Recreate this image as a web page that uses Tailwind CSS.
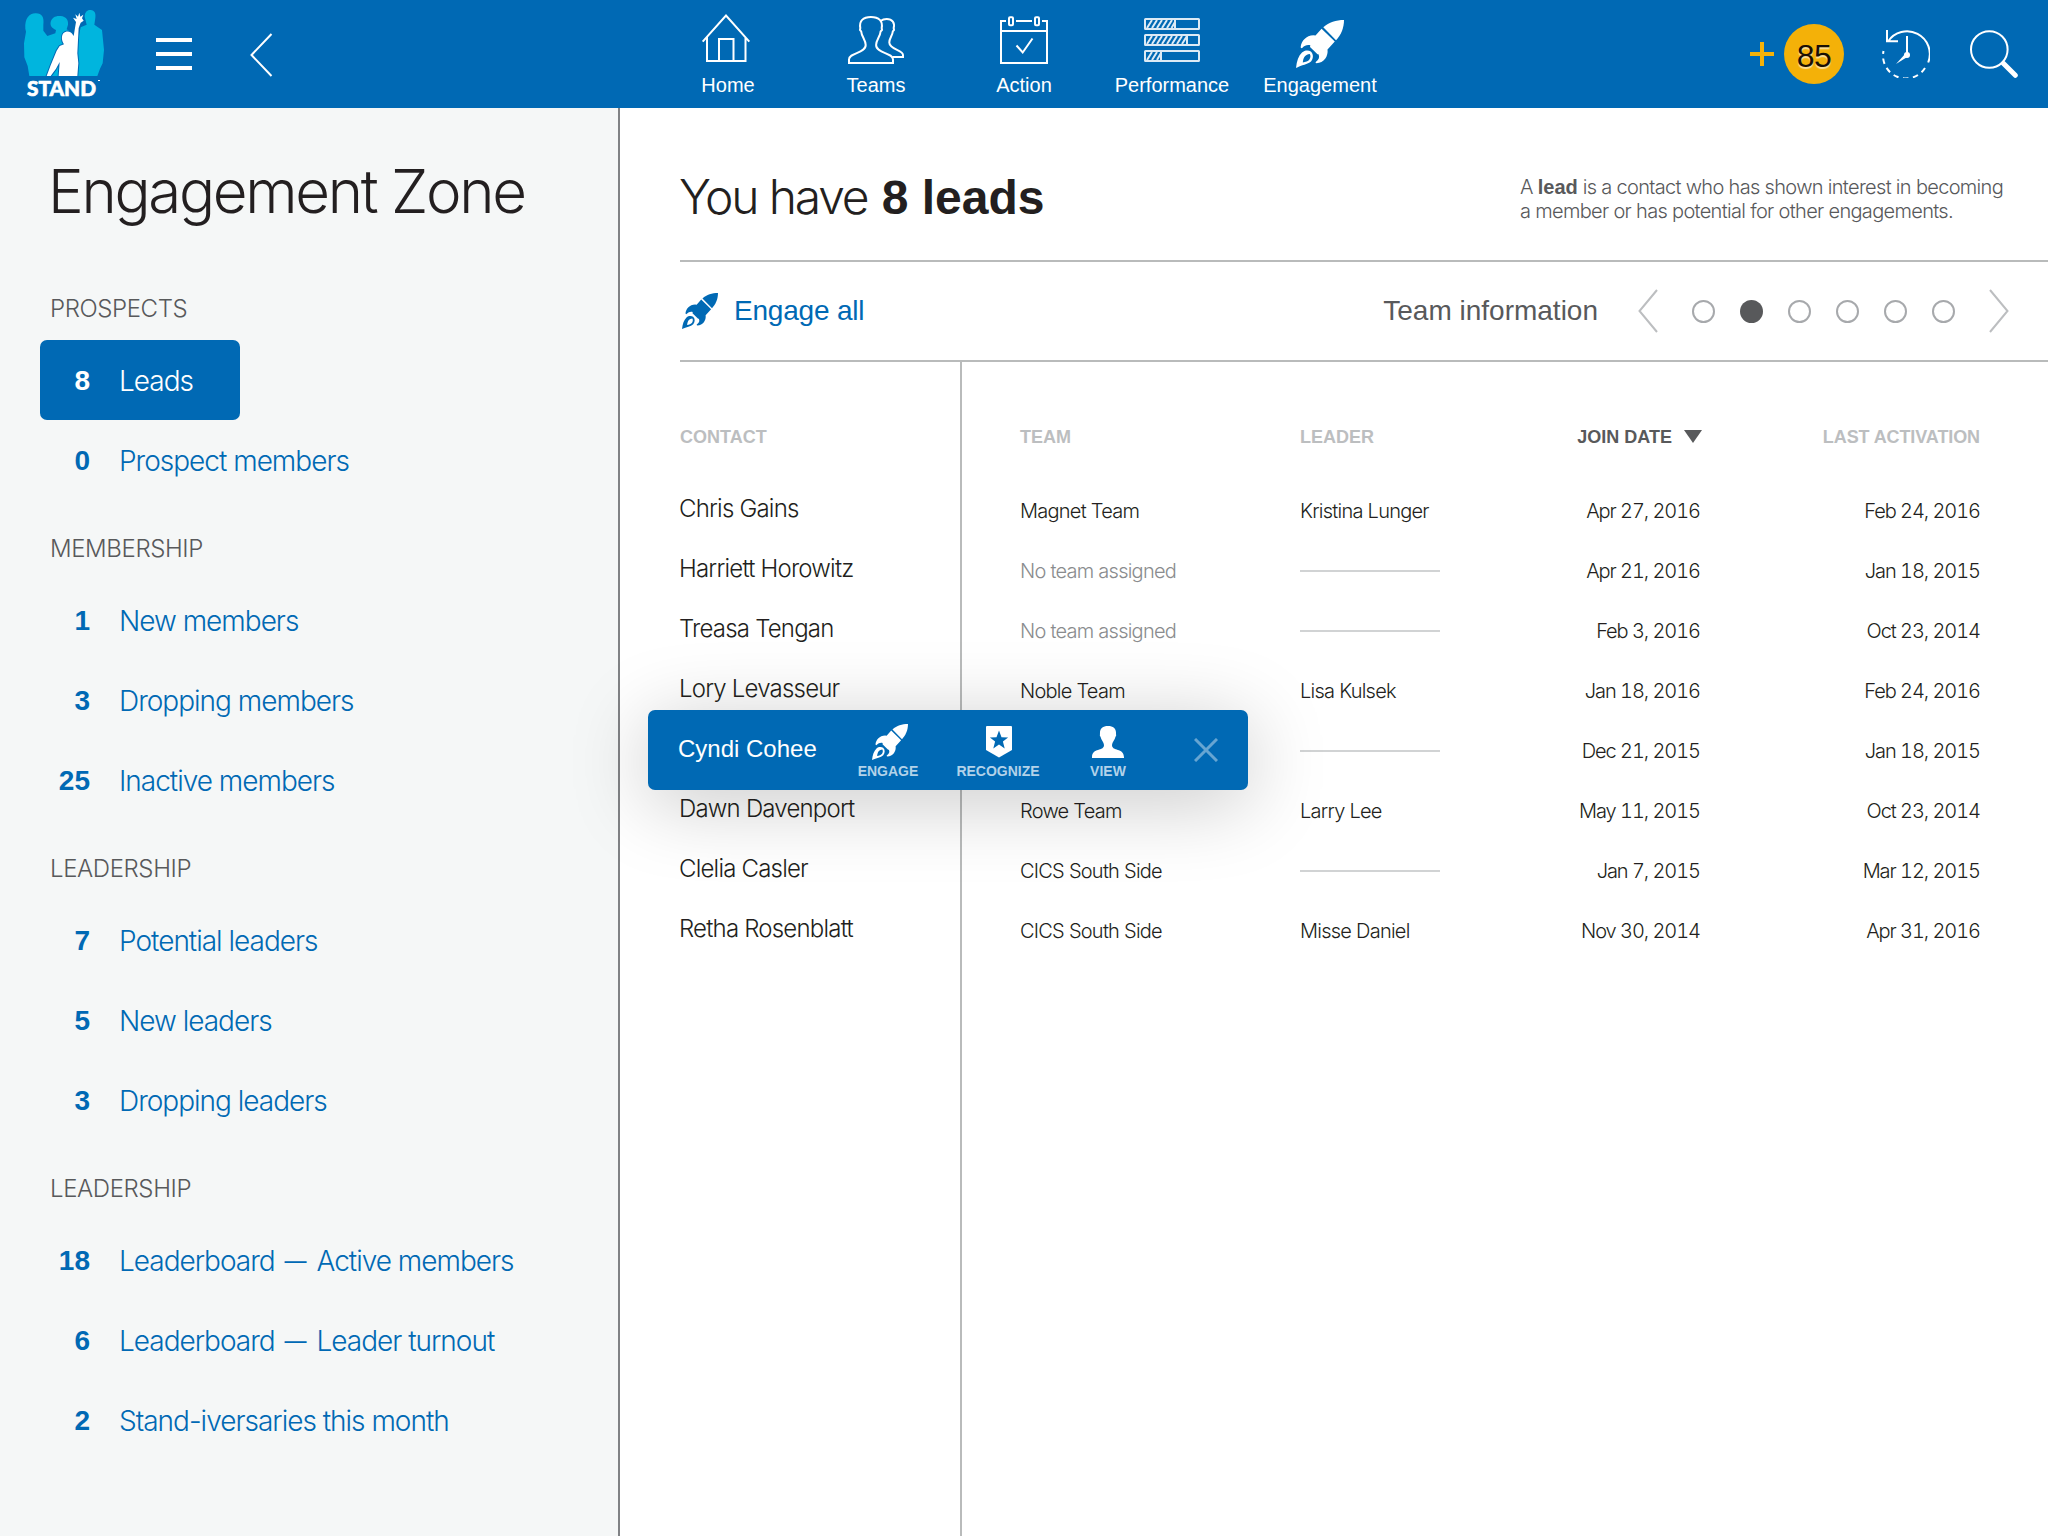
<!DOCTYPE html>
<html lang="en">
<head>
<meta charset="utf-8">
<title>Engagement Zone</title>
<script src="https://cdn.jsdelivr.net/npm/@tailwindcss/browser@4"></script>
</head>
<body class="h-[1536px] w-[2048px] overflow-hidden bg-white font-['Liberation_Sans',Arial,sans-serif] text-[#231f20]">

<svg class="hidden">
  <symbol id="rocket" viewBox="0 0 48 48">
    <path fill="currentColor" d="M27.3 7.3C33 2 40 0 48 0c0 8-3 15-8 20.200z"/>
    <path fill="currentColor" d="M25.600 8.700 38.800 21.600 31.500 29.500C32.500 36 28 43 20.500 43.200 19.600 43.200 19.300 42.300 20 41.800 23 39.500 23.800 37 22.500 34.300L21.500 34.300 14 27 14.300 25.300C11.500 24.300 8.500 25.500 6.500 27.700 5.600 28.600 4.500 28.200 4.700 26.800 5.500 21 10 15.500 17.500 15.300L19.500 15.500z"/>
    <path fill="currentColor" fill-rule="evenodd" d="M0 48C.8 41 2.500 36 6 32.600 8.500 30.200 12.500 30 14.800 31.600 17.600 34 17.600 38.500 15 41.500 11.600 44.600 6 44.800 0 48zM6.800 42.500C9.500 42.300 12.200 41.300 13.400 39.600 14.700 37.600 14.700 35.400 13.800 34 11.500 34.200 9.300 35.400 8.200 37.300 7.300 39 7 40.800 6.800 42.500z"/>
  </symbol>
</svg>

<header class="flex h-[108px] items-start bg-[#0069b4] text-white">
  <div class="flex w-[654px] shrink-0">
    <svg class="mt-2 ml-[22px] h-[90px] w-[84px] overflow-visible" viewBox="66 24 252 270">
      <path fill="#00b5de" d="M88 228 83 198 73 172 72 130 78 95 76 86C74 55 88 39 108 40 126 40 133 52 130 75L130 92 142 108 166 100 168 90C154 84 150 76 152 66 155 52 168 46 182 48 198 50 206 60 204 74L200 88 236 110 242 82 260 74 254 50C254 36 262 29 272 30 284 31 288 40 286 54L283 74 306 90 309 120 312 150 308 190 300 206 292 228z"/>
      <path fill="#fff" stroke="#0069b4" stroke-width="6" paint-order="stroke" d="M140 228 152 196 170 152 179 138 192 133C184 122 184 108 190 100 198 92 212 93 217 102L221 108 226 78 228 66 219 53 230 57 226 43 234 50 238 38 241 50 250 44 246 55 251 62 242 68 236 84 234 120 232 160 235 190 232 228H176L179 186 168 206 158 220 152 228z"/>
      <text x="81" y="287" textLength="207" lengthAdjust="spacingAndGlyphs" class="fill-white stroke-white stroke-2 font-['Lato'] text-[65px] font-black">STAND</text>
      <path fill="#fff" d="M294 240h6v3h-6z"/>
    </svg>
    <svg class="mt-[38px] ml-[50px] h-8 w-9" viewBox="0 0 36 32" fill="#fff"><path d="M0 0h36v4H0zM0 14h36v4H0zM0 28h36v4H0z"/></svg>
    <svg class="mt-[33px] ml-[58px] h-11 w-6" viewBox="0 0 24 44" fill="none" stroke="#fff" stroke-width="2"><path d="M21.500 1 1.500 22 21.500 43"/></svg>
  </div>
  <nav class="flex shrink-0 pt-3.5 text-xl/6">
    <a class="flex w-[148px] flex-col items-center"><svg class="h-14 w-[60px]" viewBox="0 0 60 56" fill="none" stroke="#fff" stroke-width="2"><path d="M4.700 27.700 28 1.500l23.300 26.200M9 23v24h38.500V23M21 47V25h14.500v22"/></svg><span class="mt-[3px]">Home</span></a>
    <a class="flex w-[148px] flex-col items-center"><svg class="h-14 w-[60px]" viewBox="-2 -2 60 56" fill="none" stroke="#fff" stroke-width="2"><path d="M1 47V43.500C1 36.500 17.700 37.500 17.700 29 17.700 24 13.500 20.500 13.200 15.500L12 14 12.300 12C11 5 15 1 22.900 1 31 1 35 5 33.700 12L34 14 32.600 15.500C32.300 20.500 28.100 24 28.100 29 28.100 37.500 45 36.500 45 43.500V47z"/><path d="M32.500 5C34.500 3.500 36.500 3 38.700 3 44.500 3 47 7 45.700 12L46 14 44.800 15.500C44.500 19.500 41.300 22 41.300 26.500 41.300 33.500 55 34 55 39V41H44.500"/></svg><span class="mt-[3px]">Teams</span></a>
    <a class="flex w-[148px] flex-col items-center"><svg class="h-14 w-[60px]" viewBox="0 0 60 56" fill="none" stroke="#fff" stroke-width="2"><path d="M12 7H7v42h46V7h-5M22 7h16M7 17h46"/><rect x="15" y="3.200" width="4" height="8" rx="1"/><rect x="41" y="3.200" width="4" height="8" rx="1"/><path d="M22.500 31.500 28.700 38.500 38.500 24.500"/></svg><span class="mt-[3px]">Action</span></a>
    <a class="flex w-[148px] flex-col items-center"><svg class="h-14 w-[60px]" viewBox="0 0 60 56" fill="none" stroke="#dceaf5" stroke-width="2"><rect x="3" y="5" width="54" height="10" rx=".5"/><rect x="3" y="21" width="54" height="10" rx=".5"/><rect x="3" y="37" width="54" height="10" rx=".5"/><path d="M33 5v10M45 21v10M19 37v10"/><path d="M5 14 10 6M10 14l5-8M15 14l5-8M20 14l5-8M25 14l5-8M29.500 14 33 8M5 30l5-8M10 30l5-8M15 30l5-8M20 30l5-8M25 30l5-8M30 30l5-8M35 30l5-8M40 30l5-8M5 46l5-8M10 46l5-8M15 46l4-7"/></svg><span class="mt-[3px]">Performance</span></a>
    <a class="flex w-[148px] flex-col items-center"><svg class="mt-1.5 mb-0.5 h-12 w-12"><use href="#rocket"/></svg><span class="mt-[3px]">Engagement</span></a>
  </nav>
  <div class="flex grow items-start">
    <svg class="mt-[42px] ml-[356px] size-6" viewBox="0 0 24 24" fill="#f5b209"><path d="M10 0h4v10h10v4H14v10h-4V14H0v-4h10z"/></svg>
    <div class="mt-6 ml-2.5 flex size-[60px] items-center justify-center rounded-full bg-[#f4b108] pt-[3px] text-[32px] tracking-[-0.5px] text-[#1a0f05] [text-shadow:0_2px_1px_rgba(255,255,255,0.6)]">85</div>
    <svg class="mt-[30px] ml-[38px] size-12" viewBox="0 0 48 48" fill="none" stroke="#fff" stroke-width="2"><path d="M6 11.500A22.800 22.800 0 0 1 46.200 32.500M5 0v11.200h11"/><path stroke-dasharray="5.500 4.500" d="M43 38A22.800 22.800 0 0 1 1.500 21"/><path d="M25 6v18"/><circle cx="25" cy="25" r="3" fill="#fff" stroke="none"/><path fill="#fff" stroke="none" d="M14 34 24 23l2 3.500z"/></svg>
    <svg class="mt-[30px] ml-10 size-12" viewBox="0 0 48 48" fill="none" stroke="#fff"><circle cx="19.300" cy="19.500" r="18.300" stroke-width="2"/><path stroke-width="5" stroke-linecap="round" d="M33.500 33.500 45.300 45.300"/></svg>
  </div>
</header>

<div class="flex h-[1428px]">
  <aside class="w-[620px] shrink-0 border-r-2 border-[#808285] bg-[#f5f7f7] font-['Inter',sans-serif] font-light">
    <h1 class="h-[152px] pt-[53px] pl-[48px] text-[60px]/[60px] tracking-[-2.3px]">Engagement Zone</h1>
    <div id="menu"></div>
  </aside>

  <main class="relative w-[1428px] shrink-0 pl-[60px]">
    <div class="flex h-[154px] justify-between border-b-2 border-[#b9bbbb]">
      <h2 class="pt-[65px] text-[48px]/[48px] whitespace-nowrap"><span class="-ml-px font-['Inter',sans-serif] font-light tracking-[-2.2px]">You have</span> <b class="ml-px font-bold">8 leads</b></h2>
      <p class="mr-7 w-[500px] pt-[67px] font-['Inter',sans-serif] text-xl/6 font-light tracking-[-0.68px] whitespace-nowrap text-[#58595b]">A <b class="font-['Liberation_Sans'] font-bold tracking-normal">lead</b> is a contact who has shown interest in becoming<br>a member or has potential for other engagements.</p>
    </div>
    <div class="flex h-[100px] items-center border-b-2 border-[#b9bbbb] text-[28px]/8">
      <a class="flex items-center text-[#0069b4]"><svg class="ml-0.5 size-9"><use href="#rocket"/></svg><span class="ml-4 tracking-[-0.2px]">Engage all</span></a>
      <div class="mr-[39px] ml-auto flex items-center text-[#58595b]">
        <span>Team information</span>
        <svg class="ml-10 h-11 w-5" viewBox="0 0 20 44" fill="none" stroke="#bcbec0" stroke-width="2"><path d="M19 1 1.500 22 19 43"/></svg>
        <div class="mx-[34px] flex gap-[25px] pt-px">
          <i class="size-[23px] rounded-full border-2 border-[#a7a9ac]"></i>
          <i class="size-[23px] rounded-full bg-[#58595b]"></i>
          <i class="size-[23px] rounded-full border-2 border-[#a7a9ac]"></i>
          <i class="size-[23px] rounded-full border-2 border-[#a7a9ac]"></i>
          <i class="size-[23px] rounded-full border-2 border-[#a7a9ac]"></i>
          <i class="size-[23px] rounded-full border-2 border-[#a7a9ac]"></i>
        </div>
        <svg class="h-11 w-5" viewBox="0 0 20 44" fill="none" stroke="#bcbec0" stroke-width="2"><path d="M1 1 18.500 22 1 43"/></svg>
      </div>
    </div>
    <div class="flex h-[1174px]">
      <div class="w-[282px] shrink-0 border-r-2 border-[#b9bbbb] pt-[62px]">
        <div class="h-[57px] text-lg/[26px] font-bold text-[#bcbec0]">CONTACT</div>
        <div id="contacts" class="-ml-px font-['Inter',sans-serif] text-2xl font-light tracking-[-0.8px]"></div>
      </div>
      <div class="pt-[62px] pl-[58px]">
        <div class="grid h-[57px] grid-cols-[280px_200px_200px_280px] text-lg/[26px] font-bold text-[#bcbec0]">
          <span>TEAM</span><span>LEADER</span>
          <span class="flex justify-end text-[#58595b]">JOIN DATE<svg class="mt-[6px] -mr-0.5 ml-3 h-[13px] w-[18px]" viewBox="0 0 18 13"><path fill="#58595b" d="M0 0h18L9 13z"/></svg></span>
          <span class="text-right tracking-[-0.1px]">LAST ACTIVATION</span>
        </div>
        <div id="rows" class="font-['Inter',sans-serif] text-xl font-light tracking-[-0.75px]"></div>
      </div>
    </div>

    <!-- Quick actions for the selected contact -->
    <div class="absolute top-[602px] left-[28px] flex h-20 w-[600px] rounded-[7px] bg-[#0069b4] text-white shadow-[0_12px_80px_rgba(0,0,0,0.22)]">
      <span class="ml-[30px] w-[140px] text-2xl/[78px]">Cyndi Cohee</span>
      <a class="ml-[30px] flex w-20 flex-col items-center pt-3.5"><svg class="ml-1 size-9"><use href="#rocket"/></svg><b class="mt-[3px] text-sm/4 text-[#b2d2e9]">ENGAGE</b></a>
      <a class="ml-[20px] flex w-[100px] flex-col items-center pt-4"><svg class="ml-0.5 h-8 w-[26px]" viewBox="0 0 26 32"><path fill="#fff" d="M1 0h24a1 1 0 0 1 1 1v23L13 31.500 0 24V1a1 1 0 0 1 1-1z"/><path fill="#0069b4" d="m13 4.500 2.500 6.700 6.600.2-5.200 4.200 1.800 6.900L13 18.600l-5.700 3.900 1.800-6.900-5.200-4.200 6.600-.2z"/></svg><b class="mt-[5px] text-sm/4 text-[#b2d2e9]">RECOGNIZE</b></a>
      <a class="ml-5 flex w-20 flex-col items-center pt-4"><svg class="h-8 w-8" viewBox="0 0 32 32"><path fill="#fff" d="M0 32C-.3 21 12 26 12 19 12 16 9 14 8.600 11L7.800 9.500 8 8C7.500 3 10.500 0 16 0 21.500 0 24.500 3 24 8L24.200 9.500 23.400 11C23 14 20 16 20 19 20 26 32.300 21 32 32z"/></svg><b class="mt-[5px] text-sm/4 text-[#b2d2e9]">VIEW</b></a>
      <svg class="mt-7 ml-[46px] size-6" viewBox="0 0 24 24" fill="none" stroke="#66a5d2" stroke-width="3"><path d="m1 1 22 22M23 1 1 23"/></svg>
    </div>
  </main>
</div>

<script>
const menu = [
  ['PROSPECTS', [[8, 'Leads'], [0, 'Prospect members']]],
  ['MEMBERSHIP', [[1, 'New members'], [3, 'Dropping members'], [25, 'Inactive members']]],
  ['LEADERSHIP', [[7, 'Potential leaders'], [5, 'New leaders'], [3, 'Dropping leaders']]],
  ['LEADERSHIP', [[18, 'Leaderboard — Active members'], [6, 'Leaderboard — Leader turnout'], [2, 'Stand-iversaries this month']]],
];
const dash = '<span class="mr-1 ml-[3px] align-[2px] text-[22px] font-normal">—</span>';
document.getElementById('menu').innerHTML = menu.map(([title, items]) =>
  `<h3 class="flex h-20 items-center pt-[18px] pl-[50px] text-2xl tracking-[-0.4px] text-[#58595b]">${title}</h3>` +
  items.map(([n, label]) => {
    const look = label === 'Leads' ? 'w-[200px] bg-[#0069b4] text-white' : 'w-[540px] text-[#0069b4]';
    return `<a class="ml-10 flex h-20 items-center rounded-[7px] pt-px text-[28px]/8 ${look}"><b class="w-[50px] text-right font-['Liberation_Sans'] font-bold">${n}</b><span class="ml-[29px] h-8 tracking-[-1px] whitespace-nowrap">${label.replace('—', dash)}</span></a>`;
  }).join('')).join('');

const contacts = [
  ['Chris Gains', 'Magnet Team', 'Kristina Lunger', 'Apr 27, 2016', 'Feb 24, 2016'],
  ['Harriett Horowitz', '', '', 'Apr 21, 2016', 'Jan 18, 2015'],
  ['Treasa Tengan', '', '', 'Feb 3, 2016', 'Oct 23, 2014'],
  ['Lory Levasseur', 'Noble Team', 'Lisa Kulsek', 'Jan 18, 2016', 'Feb 24, 2016'],
  [null, null, '', 'Dec 21, 2015', 'Jan 18, 2015'],
  ['Dawn Davenport', 'Rowe Team', 'Larry Lee', 'May 11, 2015', 'Oct 23, 2014'],
  ['Clelia Casler', 'CICS South Side', '', 'Jan 7, 2015', 'Mar 12, 2015'],
  ['Retha Rosenblatt', 'CICS South Side', 'Misse Daniel', 'Nov 30, 2014', 'Apr 31, 2016'],
];
document.getElementById('contacts').innerHTML = contacts.map(([name]) =>
  `<div class="h-[60px] leading-[56px]">${name ?? ''}</div>`).join('');
document.getElementById('rows').innerHTML = contacts.map(([, team, leader, joined, last]) =>
  `<div class="grid h-[60px] grid-cols-[280px_200px_200px_280px] items-center">
    <span>${team === '' ? '<span class="text-[#8a8c8e]">No team assigned</span>' : team ?? ''}</span>
    ${leader ? `<span>${leader}</span>` : '<i class="h-0.5 w-[140px] bg-[#d1d3d4]"></i>'}
    <span class="text-right tracking-[-1.05px] tabular-nums">${joined}</span>
    <span class="text-right tracking-[-1.05px] tabular-nums">${last}</span>
  </div>`).join('');
</script>
</body>
</html>
